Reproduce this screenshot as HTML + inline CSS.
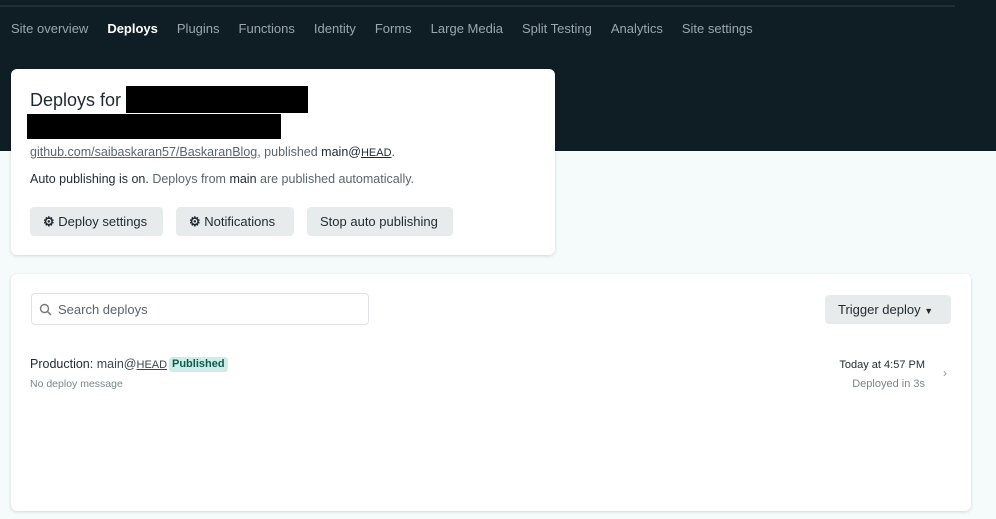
<!DOCTYPE html>
<html><head><style>
*{box-sizing:border-box;margin:0;padding:0}
body{width:996px;height:519px;overflow:hidden;background:#f5fbfb;font-family:"Liberation Sans",sans-serif;position:relative}
.hdr{position:absolute;left:0;top:0;width:996px;height:151px;background:#0f1e25}
.line{position:absolute;left:0;top:5px;width:955px;height:2px;background:#1f2f36}
.nav{position:absolute;top:21px;left:11px;font-size:13px;color:#9aa7ad;white-space:nowrap}
.nav span{margin-right:19px}
.nav b{color:#fff}
.card{position:absolute;background:#fff;border-radius:6px;box-shadow:0 1px 3px rgba(0,0,0,.15)}
.btn{position:absolute;top:207px;height:29px;background:#e8ebec;border-radius:4px;font-size:13px;color:#1f2a30;line-height:29px;padding:0 13px}
.red{position:absolute;background:#000}
.t{position:absolute;white-space:nowrap}
</style></head><body>
<div class="hdr"><div class="line"></div>
<div class="nav"><span>Site overview</span><span><b>Deploys</b></span><span>Plugins</span><span>Functions</span><span>Identity</span><span>Forms</span><span>Large Media</span><span>Split Testing</span><span>Analytics</span><span>Site settings</span></div></div>
<div class="card" style="left:11px;top:69px;width:544px;height:186px"></div>
<div class="t" style="left:30px;top:90px;font-size:18px;color:#1f2a30">Deploys for</div>
<div class="red" style="left:126px;top:86px;width:182px;height:27px"></div>
<div class="red" style="left:27px;top:114px;width:254px;height:25px"></div>
<div class="t" style="left:30px;top:145px;font-size:12.5px;color:#59656b"><u>github.com/saibaskaran57/BaskaranBlog</u>, published <span style="color:#1f2a30">main@<u style="font-size:11px">HEAD</u></span>.</div>
<div class="t" style="left:30px;top:172px;font-size:12.5px;color:#59656b"><span style="color:#1f2a30">Auto publishing is on.</span> Deploys from <span style="color:#1f2a30">main</span> are published automatically.</div>
<div class="btn" style="left:30px;width:133px"><b>⚙</b> Deploy settings</div>
<div class="btn" style="left:176px;width:118px"><b>⚙</b> Notifications</div>
<div class="btn" style="left:307px;width:146px">Stop auto publishing</div>
<div class="card" style="left:11px;top:274px;width:960px;height:237px"></div>
<div style="position:absolute;left:31px;top:293px;width:338px;height:32px;border:1px solid #dfe3e5;border-radius:4px;background:#fff"></div>
<svg style="position:absolute;left:39px;top:303px" width="13" height="13" viewBox="0 0 13 13"><circle cx="5.5" cy="5.5" r="4" fill="none" stroke="#777" stroke-width="1.4"/><path d="M8.5 8.5L12 12" stroke="#777" stroke-width="1.4"/></svg>
<div class="t" style="left:58px;top:302px;font-size:13px;color:#59656b">Search deploys</div>
<div style="position:absolute;left:825px;top:295px;width:126px;height:29px;background:#e8ebec;border-radius:4px;font-size:13px;color:#1f2a30;line-height:29px;padding-left:13px">Trigger deploy <span style="font-size:9px">▼</span></div>
<div class="t" style="left:30px;top:357px;font-size:12.5px;color:#1f2a30">Production: <span style="color:#3a464c">main@<u style="font-size:11px">HEAD</u></span></div>
<div class="t" style="left:169px;top:357px;height:15px;padding:0 3px;background:#cdeee8;color:#0d5a4e;font-size:11px;font-weight:bold;line-height:15px;border-radius:3px">Published</div>
<div class="t" style="left:30px;top:378px;font-size:10.5px;color:#7a868c">No deploy message</div>
<div class="t" style="right:71px;top:359px;font-size:11px;color:#1f2a30">Today at 4:57 PM</div>
<div class="t" style="right:71px;top:378px;font-size:11px;color:#7a868c">Deployed in 3s</div>
<div class="t" style="left:943px;top:366px;font-size:12px;color:#999">›</div>
</body></html>
